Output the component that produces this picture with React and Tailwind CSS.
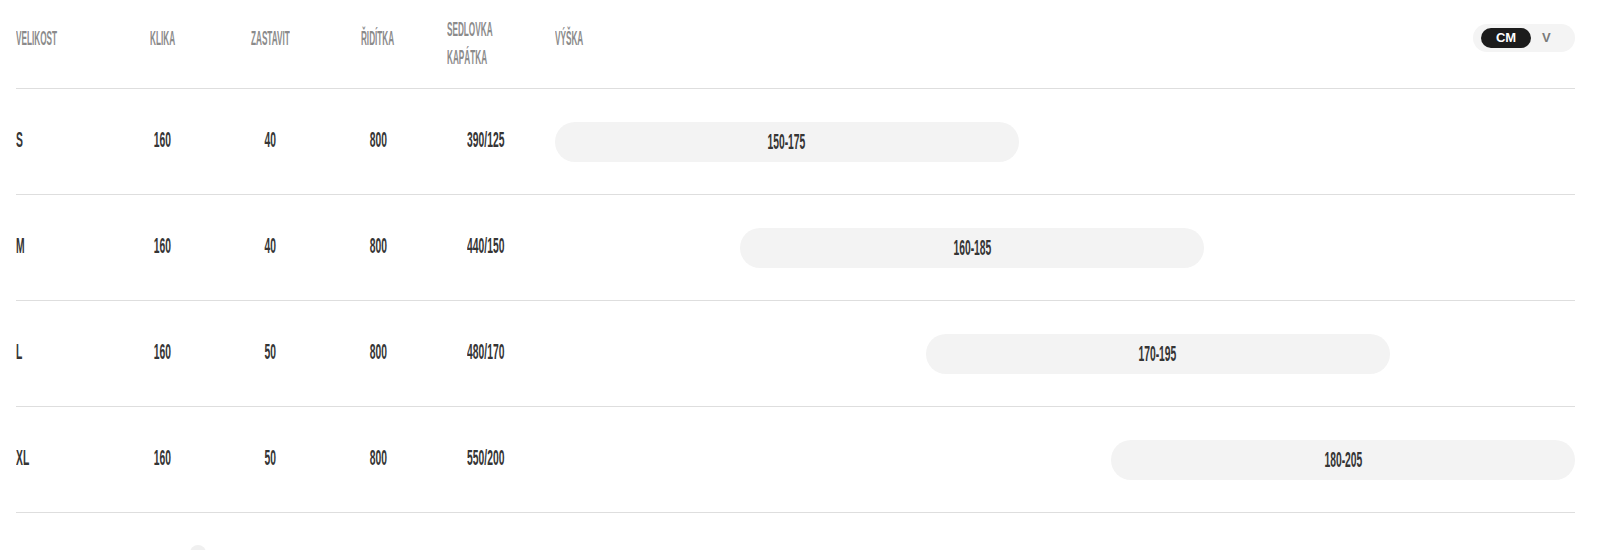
import React from "react";

const rows = [
  { size: "S", klika: "160", zastavit: "40", riditka: "800", sedlovka: "390/125", from: 150, to: 175 },
  { size: "M", klika: "160", zastavit: "40", riditka: "800", sedlovka: "440/150", from: 160, to: 185 },
  { size: "L", klika: "160", zastavit: "50", riditka: "800", sedlovka: "480/170", from: 170, to: 195 },
  { size: "XL", klika: "160", zastavit: "50", riditka: "800", sedlovka: "550/200", from: 180, to: 205 },
];

const MIN = 150;
const MAX = 205;

function Head({ children, center }) {
  return (
    <span
      className={`inline-block whitespace-nowrap text-[20px] font-bold leading-[28px] text-[#8b8b8b] scale-x-[0.41] ${
        center ? "origin-center" : "origin-left"
      }`}
    >
      {children}
    </span>
  );
}

function Val({ children, center }) {
  return (
    <span
      className={`inline-block whitespace-nowrap text-[22px] font-bold leading-none text-[#353535] scale-x-[0.47] ${
        center ? "origin-center" : "origin-left"
      }`}
    >
      {children}
    </span>
  );
}

const grid = "grid grid-cols-[93px_107px_108px_108px_108px_1fr]";

export default function App() {
  return (
    <div
      className="h-[550px] overflow-hidden bg-white pl-4 pr-[25px]"
      style={{ fontFamily: '"Liberation Sans", Arial, sans-serif' }}
    >
      <div className={`${grid} h-[89px] items-start border-b border-[#dedede]`}>
        <div className="pt-6">
          <Head>VELIKOST</Head>
        </div>
        <div className="pt-6 text-center">
          <Head center>KLIKA</Head>
        </div>
        <div className="pt-6 text-center">
          <Head center>ZASTAVIT</Head>
        </div>
        <div className="pt-6 text-center">
          <Head center>ŘIDÍTKA</Head>
        </div>
        <div className="flex flex-col pl-[15px] pt-[15px]">
          <Head>SEDLOVKA</Head>
          <Head>KAPÁTKA</Head>
        </div>
        <div className="flex items-start justify-between pl-[15px] pt-6">
          <Head>VÝŠKA</Head>
          <div className="flex h-[28px] w-[102px] items-center rounded-full bg-[#f4f4f4] pl-2">
            <span className="flex h-5 w-[50px] items-center justify-center rounded-full bg-[#1c1c1c] text-[13px] font-bold text-white">
              CM
            </span>
            <span className="ml-[11px] text-[13px] font-bold text-[#7a7a7a]">V</span>
          </div>
        </div>
      </div>

      {rows.map((r) => {
        const left = ((r.from - MIN) / (MAX - MIN)) * 100;
        const width = ((r.to - r.from) / (MAX - MIN)) * 100;
        return (
          <div key={r.size} className={`${grid} h-[106px] items-center border-b border-[#dedede]`}>
            <div>
              <Val>{r.size}</Val>
            </div>
            <div className="text-center">
              <Val center>{r.klika}</Val>
            </div>
            <div className="text-center">
              <Val center>{r.zastavit}</Val>
            </div>
            <div className="text-center">
              <Val center>{r.riditka}</Val>
            </div>
            <div className="text-center">
              <Val center>{r.sedlovka}</Val>
            </div>
            <div className="pl-[15px]">
              <div className="flex">
                <div style={{ width: `${left}%` }} />
                <div
                  className="flex h-10 items-center justify-center rounded-full bg-[#f3f3f3]"
                  style={{ width: `${width}%` }}
                >
                  <Val center>
                    {r.from}-{r.to}
                  </Val>
                </div>
              </div>
            </div>
          </div>
        );
      })}

      <div className="pl-[174px] pt-8">
        <div className="h-4 w-4 rounded-full bg-[#f0f0f0]" />
      </div>
    </div>
  );
}
